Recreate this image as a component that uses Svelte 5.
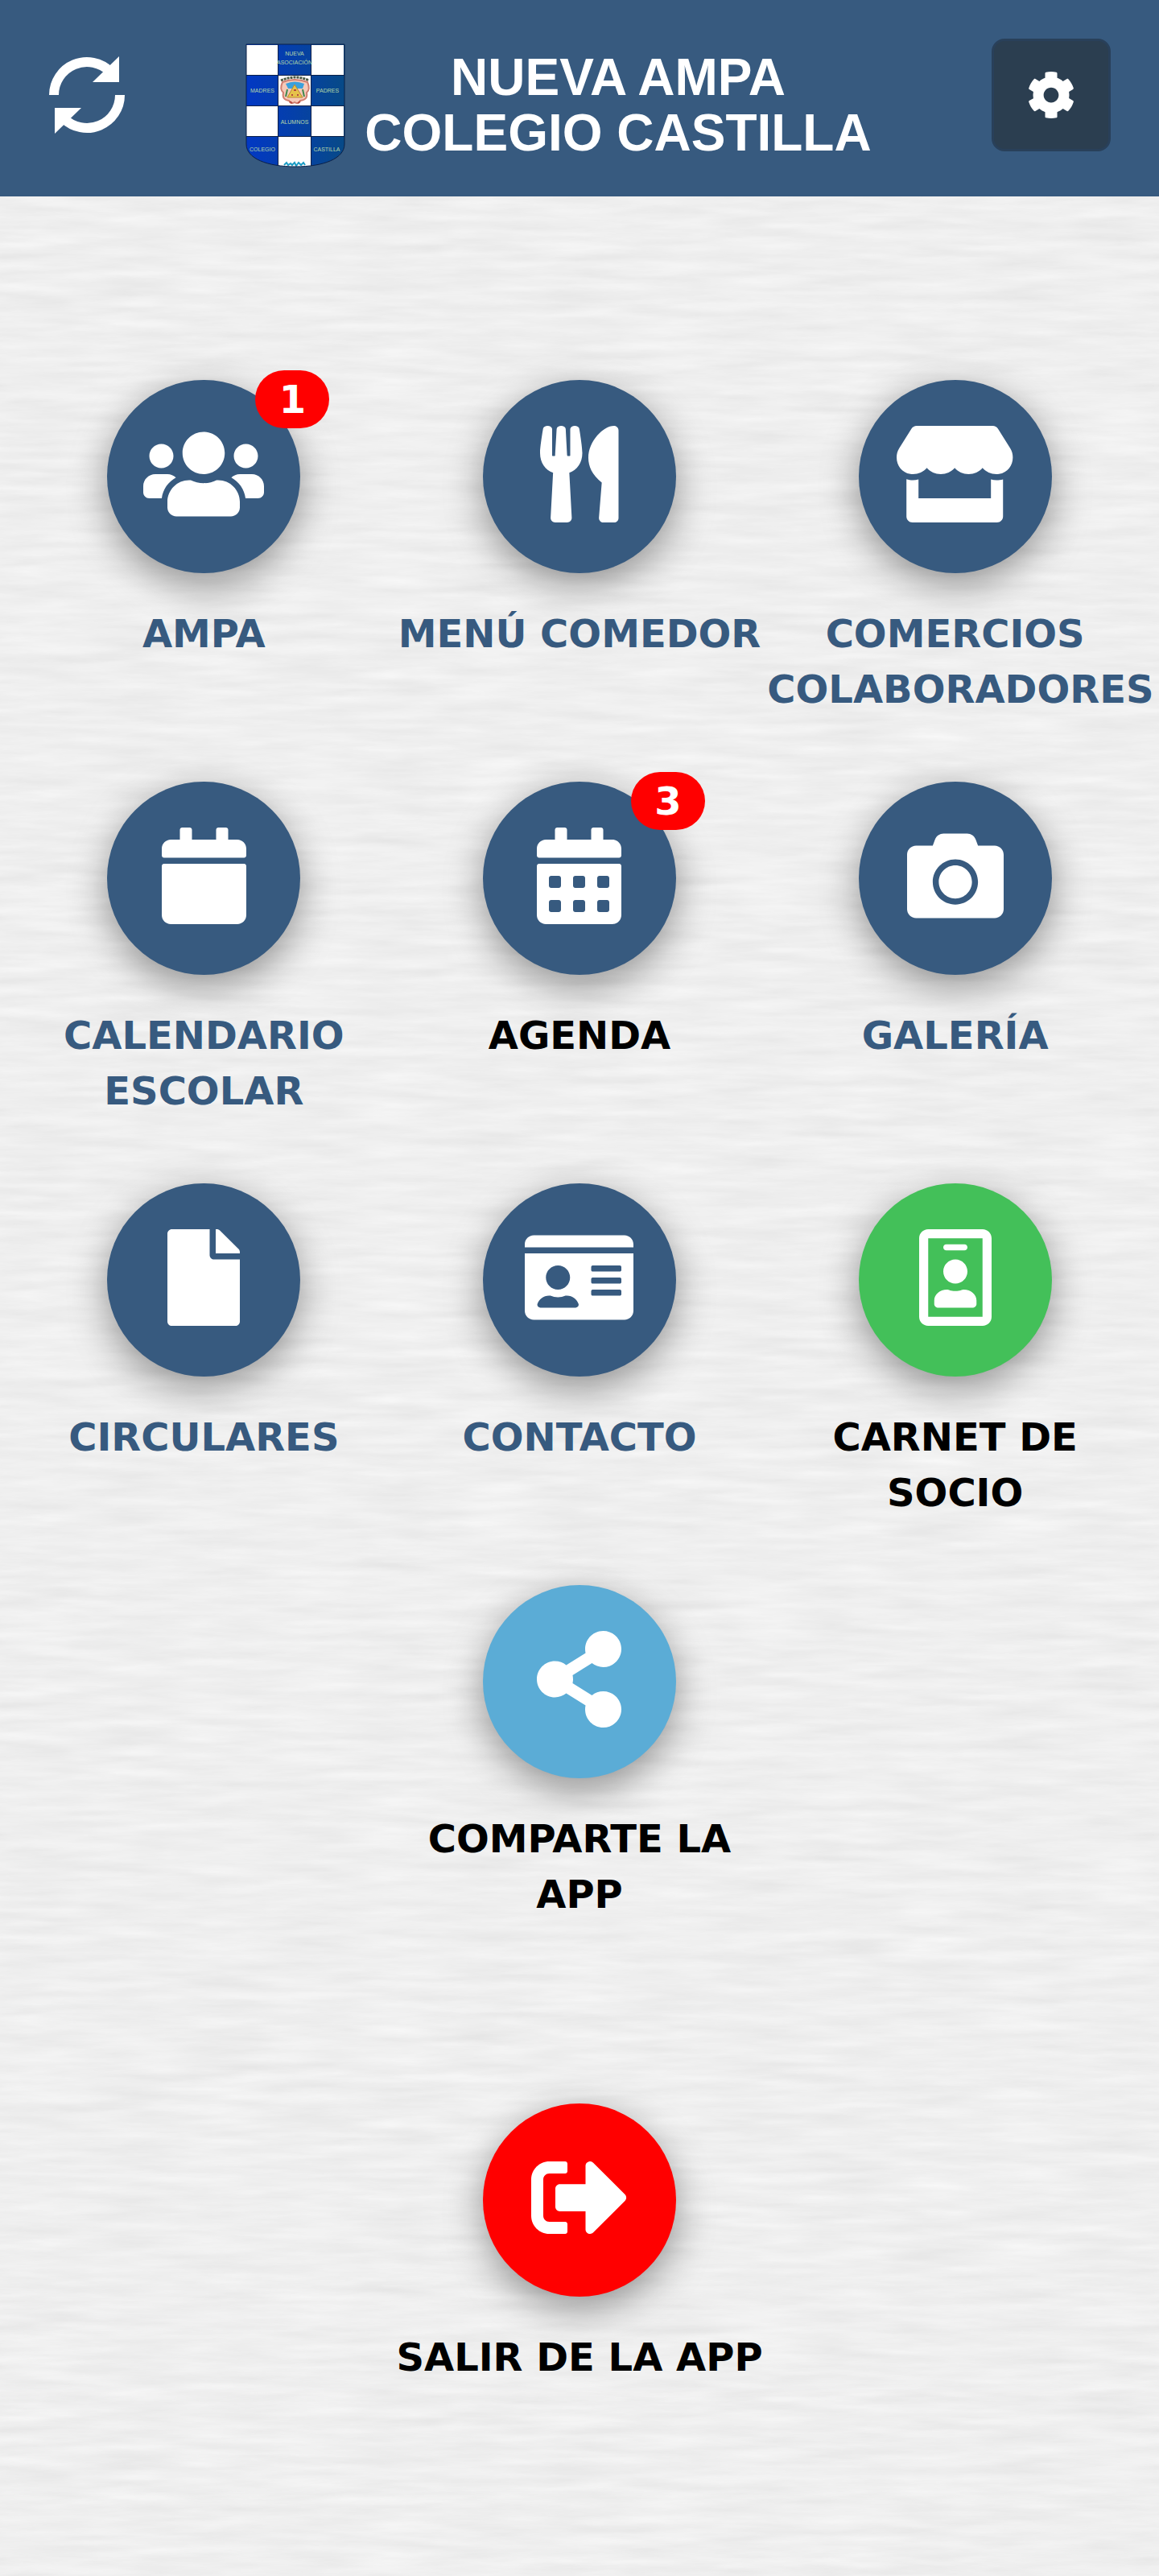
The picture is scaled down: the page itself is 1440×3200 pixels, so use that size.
<script lang="ts">
  type Tile = {
    label: string;
    icon: keyof typeof icons;
    tone?: string;
    dark?: boolean;
    badge?: number;
    wide?: boolean;
  };

  // Solid glyphs on a 512-unit grid: [width, path]
  const icons = {
    users: [640, 'M96 224c35.3 0 64-28.7 64-64s-28.7-64-64-64-64 28.7-64 64 28.7 64 64 64zm448 0c35.3 0 64-28.7 64-64s-28.7-64-64-64-64 28.7-64 64 28.7 64 64 64zm32 32h-64c-17.6 0-33.5 7.1-45.1 18.6 40.3 22.1 68.9 62 75.1 109.4h66c17.7 0 32-14.3 32-32v-32c0-35.3-28.7-64-64-64zm-256 0c61.9 0 112-50.1 112-112S381.9 32 320 32 208 82.1 208 144s50.1 112 112 112zm76.8 32h-8.3c-20.8 10-43.9 16-68.5 16s-47.6-6-68.5-16h-8.3C179.6 288 128 339.6 128 403.2V432c0 26.5 21.5 48 48 48h288c26.5 0 48-21.5 48-48v-28.8c0-63.6-51.6-115.2-115.2-115.2zm-223.7-13.4C161.5 263.1 145.6 256 128 256H64c-35.3 0-64 28.7-64 64v32c0 17.7 14.3 32 32 32h65.9c6.3-47.4 34.9-87.3 75.2-109.4z'],
    utensils: [416, 'M207.9 15.2c.8 4.7 16.1 94.5 16.1 128.8 0 52.3-27.8 89.6-68.9 104.6L168 486.7c.7 13.7-10.2 25.3-24 25.3H80c-13.7 0-24.7-11.5-24-25.3l12.9-238.1C27.7 233.6 0 196.2 0 144 0 109.6 15.3 19.9 16.1 15.2 19.3-5.1 61.4-5.4 64 16.3v141.2c1.3 3.4 15.1 3.2 16 0 1.4-25.3 7.9-139.2 8-141.8 3.3-20.8 44.7-20.8 47.9 0 .2 2.7 6.6 116.5 8 141.8.9 3.2 14.8 3.4 16 0V16.3c2.6-21.6 44.8-21.4 48-1.1zm119.2 285.7l-15 185.1c-1.2 14 9.9 26 23.9 26h56c13.3 0 24-10.7 24-24V24c0-13.2-10.7-24-24-24-82.5 0-221.4 178.5-64.9 300.9z'],
    store: [616, 'M602 118.6L537.1 15C531.3 5.7 521 0 510 0H106C95 0 84.7 5.7 78.9 15L14 118.6c-33.5 53.5-3.8 127.9 58.8 136.4 4.5.6 9.1.9 13.7.9 29.6 0 55.8-13 73.8-33.1 18 20.1 44.3 33.1 73.8 33.1 29.6 0 55.8-13 73.8-33.1 18 20.1 44.3 33.1 73.8 33.1 29.6 0 55.8-13 73.8-33.1 18.1 20.1 44.3 33.1 73.8 33.1 4.7 0 9.2-.3 13.7-.9 62.8-8.4 92.6-82.8 59-136.4zM529.5 288c-10 0-19.9-1.5-29.5-3.8V384H116v-99.8c-9.6 2.2-19.5 3.8-29.5 3.8-6 0-12.1-.4-18-1.2-5.6-.8-11.1-2.1-16.4-3.6V480c0 17.7 14.3 32 32 32h448c17.7 0 32-14.3 32-32V283.2c-5.4 1.6-10.8 2.9-16.4 3.6-6.1.8-12.1 1.2-18.2 1.2z'],
    calendar: [448, 'M12 192h424c6.6 0 12 5.4 12 12v260c0 26.5-21.5 48-48 48H48c-26.5 0-48-21.5-48-48V204c0-6.6 5.4-12 12-12zm436-44v-36c0-26.5-21.5-48-48-48h-48V12c0-6.6-5.4-12-12-12h-40c-6.6 0-12 5.4-12 12v52H160V12c0-6.6-5.4-12-12-12h-40c-6.6 0-12 5.4-12 12v52H48C21.5 64 0 85.5 0 112v36c0 6.6 5.4 12 12 12h424c6.6 0 12-5.4 12-12z'],
    agenda: [448, 'M12 192h424c6.6 0 12 5.4 12 12v260c0 26.5-21.5 48-48 48H48c-26.5 0-48-21.5-48-48V204c0-6.6 5.4-12 12-12zM448 148v-36c0-26.5-21.5-48-48-48h-48V12c0-6.6-5.4-12-12-12h-40c-6.6 0-12 5.4-12 12v52H160V12c0-6.6-5.4-12-12-12h-40c-6.6 0-12 5.4-12 12v52H48C21.5 64 0 85.5 0 112v36c0 6.6 5.4 12 12 12h424c6.6 0 12-5.4 12-12zM76 256h40c6.6 0 12 5.4 12 12v40c0 6.6-5.4 12-12 12H76c-6.6 0-12-5.4-12-12v-40c0-6.6 5.4-12 12-12zm128 0h40c6.6 0 12 5.4 12 12v40c0 6.6-5.4 12-12 12h-40c-6.6 0-12-5.4-12-12v-40c0-6.6 5.4-12 12-12zm128 0h40c6.6 0 12 5.4 12 12v40c0 6.6-5.4 12-12 12h-40c-6.6 0-12-5.4-12-12v-40c0-6.6 5.4-12 12-12zM76 384h40c6.6 0 12 5.4 12 12v40c0 6.6-5.4 12-12 12H76c-6.6 0-12-5.4-12-12v-40c0-6.6 5.4-12 12-12zm128 0h40c6.6 0 12 5.4 12 12v40c0 6.6-5.4 12-12 12h-40c-6.6 0-12-5.4-12-12v-40c0-6.6 5.4-12 12-12zm128 0h40c6.6 0 12 5.4 12 12v40c0 6.6-5.4 12-12 12h-40c-6.6 0-12-5.4-12-12v-40c0-6.6 5.4-12 12-12z'],
    camera: [512, 'M512 144v288c0 26.5-21.5 48-48 48H48c-26.5 0-48-21.5-48-48V144c0-26.5 21.5-48 48-48h88l12.3-32.9c7-18.7 24.9-31.1 44.9-31.1h125.5c20 0 37.9 12.4 44.9 31.1L376 96h88c26.5 0 48 21.5 48 48zM376 288c0-66.2-53.8-120-120-120s-120 53.8-120 120 53.8 120 120 120 120-53.8 120-120zm-32 0c0 48.5-39.5 88-88 88s-88-39.5-88-88 39.5-88 88-88 88 39.5 88 88z'],
    file: [384, 'M224 136V0H24C10.7 0 0 10.7 0 24v464c0 13.3 10.7 24 24 24h336c13.3 0 24-10.7 24-24V160H248c-13.2 0-24-10.8-24-24zm160-14.1v6.1H256V0h6.1c6.4 0 12.5 2.5 17 7l97.9 98c4.5 4.5 7 10.6 7 16.9z'],
    card: [576, 'M528 32H48C21.5 32 0 53.5 0 80v16h576V80c0-26.5-21.5-48-48-48zM0 432c0 26.5 21.5 48 48 48h480c26.5 0 48-21.5 48-48V128H0v304zM360 192h144c4.4 0 8 3.6 8 8v16c0 4.4-3.6 8-8 8H360c-4.4 0-8-3.6-8-8v-16c0-4.4 3.6-8 8-8zm0 64h144c4.4 0 8 3.6 8 8v16c0 4.4-3.6 8-8 8H360c-4.4 0-8-3.6-8-8v-16c0-4.4 3.6-8 8-8zm0 64h144c4.4 0 8 3.6 8 8v16c0 4.4-3.6 8-8 8H360c-4.4 0-8-3.6-8-8v-16c0-4.4 3.6-8 8-8zM176 192c35.3 0 64 28.7 64 64s-28.7 64-64 64-64-28.7-64-64 28.7-64 64-64zM67.1 396.2C75.5 370.5 99.6 352 128 352h8.2c12.3 5.1 25.7 8 39.8 8s27.6-2.9 39.8-8h8.2c28.4 0 52.5 18.5 60.9 44.2 3.2 9.9-5.2 19.8-15.6 19.8H82.7c-10.4 0-18.8-10-15.6-19.8z'],
    badge: [384, 'M336 0H48C21.5 0 0 21.5 0 48v416c0 26.5 21.5 48 48 48h288c26.5 0 48-21.5 48-48V48c0-26.5-21.5-48-48-48zm0 464H48V48h288v416zM144 112h96c8.8 0 16-7.2 16-16s-7.2-16-16-16h-96c-8.8 0-16 7.2-16 16s7.2 16 16 16zm48 176c35.3 0 64-28.7 64-64s-28.7-64-64-64-64 28.7-64 64 28.7 64 64 64zm-89.6 128h179.2c12.4 0 22.4-8.6 22.4-19.2v-19.2c0-31.8-30.1-57.6-67.2-57.6-10.8 0-18.7 8-44.8 8-26.9 0-33.4-8-44.8-8-37.1 0-67.2 25.8-67.2 57.6v19.2c0 10.6 10 19.2 22.4 19.2z'],
    share: [448, 'M352 320c-22.608 0-43.387 7.819-59.79 20.895l-102.486-64.054a96.551 96.551 0 0 0 0-41.683l102.486-64.054C308.613 184.181 329.392 192 352 192c53.019 0 96-42.981 96-96S405.019 0 352 0s-96 42.981-96 96c0 7.158.79 14.13 2.276 20.841L155.79 180.895C139.387 167.819 118.608 160 96 160c-53.019 0-96 42.981-96 96s42.981 96 96 96c22.608 0 43.387-7.819 59.79-20.895l102.486 64.054A96.301 96.301 0 0 0 256 416c0 53.019 42.981 96 96 96s96-42.981 96-96-42.981-96-96-96z'],
    exit: [512, 'M497 273L329 441c-15 15-41 4.5-41-17v-96H152c-13.3 0-24-10.7-24-24v-96c0-13.3 10.7-24 24-24h136V88c0-21.4 25.9-32 41-17l168 168c9.3 9.4 9.3 24.6 0 34zM192 436v-40c0-6.6-5.4-12-12-12H96c-17.7 0-32-14.3-32-32V160c0-17.7 14.3-32 32-32h84c6.6 0 12-5.4 12-12V76c0-6.6-5.4-12-12-12H96c-53 0-96 43-96 96v192c0 53 43 96 96 96h84c6.6 0 12-5.4 12-12z'],
  } as const;

  const cog = 'M487.4 315.7l-42.6-24.6c4.3-23.2 4.3-47 0-70.2l42.6-24.6c4.9-2.8 7.1-8.6 5.5-14-11.1-35.6-30-67.8-54.7-94.6-3.8-4.1-10-5.1-14.8-2.3L380.8 110c-17.9-15.4-38.5-27.3-60.8-35.1V25.8c0-5.6-3.9-10.5-9.4-11.7-36.7-8.2-74.3-7.8-109.2 0-5.5 1.2-9.4 6.1-9.4 11.7V75c-22.2 7.9-42.8 19.8-60.8 35.1L88.7 85.5c-4.9-2.8-11-1.9-14.8 2.3-24.7 26.7-43.6 58.9-54.7 94.6-1.7 5.4.6 11.2 5.5 14L67.3 221c-4.3 23.2-4.3 47 0 70.2l-42.6 24.6c-4.9 2.8-7.1 8.6-5.5 14 11.1 35.6 30 67.8 54.7 94.6 3.8 4.1 10 5.1 14.8 2.3l42.6-24.6c17.9 15.4 38.5 27.3 60.8 35.1v49.2c0 5.6 3.9 10.5 9.4 11.7 36.7 8.2 74.3 7.8 109.2 0 5.5-1.2 9.4-6.1 9.4-11.7v-49.2c22.2-7.9 42.8-19.8 60.8-35.1l42.6 24.6c4.9 2.8 11 1.9 14.8-2.3 24.7-26.7 43.6-58.9 54.7-94.6 1.5-5.5-.7-11.3-5.6-14.1zM256 336c-44.1 0-80-35.9-80-80s35.9-80 80-80 80 35.9 80 80-35.9 80-80 80z';

  const tiles: Tile[] = [
    { label: 'AMPA', icon: 'users', badge: 1 },
    { label: 'MENÚ COMEDOR', icon: 'utensils' },
    { label: 'COMERCIOS COLABORADORES', icon: 'store' },
    { label: 'CALENDARIO ESCOLAR', icon: 'calendar' },
    { label: 'AGENDA', icon: 'agenda', dark: true, badge: 3 },
    { label: 'GALERÍA', icon: 'camera' },
    { label: 'CIRCULARES', icon: 'file' },
    { label: 'CONTACTO', icon: 'card' },
    { label: 'CARNET DE SOCIO', icon: 'badge', tone: 'green', dark: true },
    { label: 'COMPARTE LA APP', icon: 'share', tone: 'sky', dark: true, wide: true },
  ];
  const exitTile: Tile = { label: 'SALIR DE LA APP', icon: 'exit', tone: 'red', dark: true };
</script>

{#snippet tileLink(t: Tile)}
  <a class="tile {t.tone ?? 'navy'}" class:dark={t.dark} class:wide={t.wide} href="#{t.icon}">
    <span class="disc">
      <svg class="glyph" viewBox="0 0 {icons[t.icon][0]} 512" aria-hidden="true">
        <path fill-rule="evenodd" d={icons[t.icon][1]} />
      </svg>
      {#if t.badge}<span class="count">{t.badge}</span>{/if}
    </span>
    <span class="label">{t.label}</span>
  </a>
{/snippet}

<header class="bar">
  <button class="sync" type="button" aria-label="Actualizar">
    <svg viewBox="0 0 96 96" aria-hidden="true">
      <path class="arc" d="M7 48A41 41 0 0 1 77 19M89 48A41 41 0 0 1 19 77" />
      <path d="M88 0V32H55ZM8 96V64H41Z" />
    </svg>
  </button>

  <div class="brand">
    <svg class="shield" viewBox="0 0 124 154" aria-hidden="true">
      <defs>
        <clipPath id="shield-shape">
          <path d="M1 1H123V125C123 143 97 153 62 153S1 143 1 125Z" />
        </clipPath>
        <linearGradient id="shield-blue" x1="0" x2="1">
          <stop offset="0" stop-color="#0238c4" />
          <stop offset=".5" stop-color="#0540a8" />
          <stop offset="1" stop-color="#074a86" />
        </linearGradient>
      </defs>
      <g clip-path="url(#shield-shape)">
        <rect width="124" height="154" fill="url(#shield-blue)" />
        <path fill="#fff" d="M1 2H40V39H1ZM82 2H122V39H82ZM41 40H81V77H41ZM1 78H40V115H1ZM82 78H122V115H82ZM41 116H81V154H41Z" />
        <path class="grid" d="M40.5 0V154M81.5 0V154M0 39.5H124M0 77.5H124M0 115.5H124" />
        <path fill="none" stroke="#1b9bc4" stroke-width="2" d="M48 151l3-3 2 3 3-2 2 2 3-3 2 4 3-4 3 3 3-3 2 3" />
      </g>
      <g fill="none">
        <path stroke="#4c5a44" stroke-width="3" stroke-dasharray="3 1" d="M44 46Q62 38 79 46" />
        <path fill="#f6c9b8" stroke="#cf7f70" stroke-width="2" d="M46 48Q61 42 77 48Q81 57 76 61Q78 70 68 71Q66 76 61 73Q56 76 54 71Q45 70 47 61Q42 57 46 48Z" />
        <path fill="#3aa0dc" d="M50 50Q61 45 73 50L71 56H53Z" />
        <path fill="#e6c24a" stroke="#b98a35" d="M61 51L71 67H52Z" />
        <path stroke="#3f8a4e" stroke-width="2" d="M52 57L50 66M71 57L73 66" />
        <path stroke="#b5473d" stroke-width="2" d="M57 64h2M64 64h2M60 58h3M55 72l3 2M65 74l3-2" />
      </g>
      <path class="edge" d="M1 1H123V125C123 143 97 153 62 153S1 143 1 125Z" />
      <g class="motto">
        <text x="61" y="15">NUEVA</text>
        <text x="61" y="26">ASOCIACIÓN</text>
        <text x="21" y="61">MADRES</text>
        <text x="102" y="61">PADRES</text>
        <text x="61" y="100">ALUMNOS</text>
        <text x="21" y="134">COLEGIO</text>
        <text x="101" y="134">CASTILLA</text>
      </g>
    </svg>
    <h1>NUEVA AMPA<br />COLEGIO CASTILLA</h1>
  </div>

  <button class="settings" type="button" aria-label="Ajustes">
    <svg viewBox="0 0 512 512" aria-hidden="true"><path d={cog} /></svg>
  </button>
</header>

<main>
  <nav class="menu" aria-label="Menú principal">
    {#each tiles as t}
      {@render tileLink(t)}
    {/each}
  </nav>
  <nav class="leave" aria-label="Salir">
    {@render tileLink(exitTile)}
  </nav>
</main>

<style>
  :global(body) {
    margin: 0;
    background-color: #efefef;
    background-image: url("data:image/svg+xml,%3Csvg xmlns='http://www.w3.org/2000/svg' width='1440' height='900'%3E%3Cfilter id='p' x='0' y='0' width='100%25' height='100%25' color-interpolation-filters='sRGB'%3E%3CfeTurbulence type='fractalNoise' baseFrequency='.009 .08' numOctaves='5' seed='7' stitchTiles='stitch'/%3E%3CfeColorMatrix values='.05 .05 0 0 .886 .05 .05 0 0 .886 .05 .05 0 0 .886 0 0 0 0 1'/%3E%3C/filter%3E%3Crect width='1440' height='900' filter='url(%23p)'/%3E%3C/svg%3E");
    font-family: Verdana, "DejaVu Sans", sans-serif;
  }

  .bar {
    display: flex;
    justify-content: space-between;
    align-items: flex-start;
    padding: 48px 60px 36px;
    background: #375a7f;
  }

  button {
    display: grid;
    place-items: center;
    box-sizing: border-box;
    height: 140px;
    padding: 0;
    border: 0;
    background: none;
    cursor: pointer;
  }

  svg {
    display: block;
    fill: #fff;
  }

  .sync svg {
    width: 96px;
    height: 96px;
  }

  .arc {
    fill: none;
    stroke: #fff;
    stroke-width: 12;
  }

  .settings {
    width: 148px;
    border: 3px solid #29405a;
    border-radius: 16px;
    background: #2b3e50;
  }

  .settings svg {
    width: 60px;
    height: 60px;
  }

  .brand {
    display: flex;
    align-items: center;
    gap: 24px;
    padding-top: 6px;
  }

  .shield {
    width: 124px;
    height: 154px;
  }

  .grid,
  .edge {
    fill: none;
    stroke: #0b2048;
  }

  .motto {
    fill: #b5d8a8;
    font-family: "Liberation Sans", sans-serif;
    font-size: 7px;
    text-anchor: middle;
  }

  h1 {
    margin: 0;
    color: #fff;
    font-family: "Liberation Sans", sans-serif;
    font-size: 64px;
    font-weight: 700;
    line-height: 69px;
    text-align: center;
  }

  main {
    padding: 228px 20px 80px;
  }

  .menu {
    display: grid;
    grid-template-columns: repeat(3, minmax(0, 1fr));
    row-gap: 80px;
  }

  .leave {
    display: grid;
    grid-template-columns: minmax(0, 467px);
    justify-content: center;
    padding-top: 225px;
  }

  .tile {
    display: flex;
    flex-direction: column;
    gap: 41px;
    color: #375a7f;
    text-decoration: none;
  }

  .wide {
    grid-column: 2;
  }

  .disc {
    position: relative;
    display: grid;
    place-items: center;
    align-self: center;
    box-sizing: border-box;
    width: 240px;
    height: 240px;
    padding-bottom: 6px;
    border-radius: 50%;
    box-shadow: 0 14px 48px rgba(0, 0, 0, 0.4);
  }

  .navy .disc {
    background: #375a7f;
  }

  .green .disc {
    background: #43c059;
  }

  .sky .disc {
    background: #5bacd6;
  }

  .red .disc {
    background: #f00;
  }

  .glyph {
    height: 120px;
  }

  .count {
    position: absolute;
    top: -12px;
    right: -36px;
    box-sizing: border-box;
    min-width: 92px;
    border-radius: 36px;
    background: #f00;
    color: #fff;
    font-size: 48px;
    font-weight: 700;
    line-height: 72px;
    text-align: center;
  }

  .label {
    font-size: 48px;
    font-weight: 700;
    line-height: 69px;
    text-align: center;
  }

  .dark .label {
    color: #000;
  }
</style>
